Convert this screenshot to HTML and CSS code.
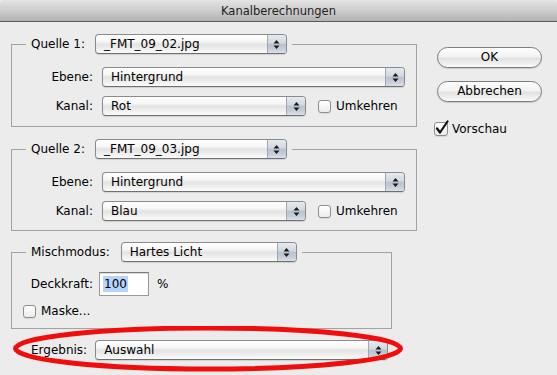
FILE: index.html
```html
<!DOCTYPE html>
<html lang="de">
<head>
<meta charset="utf-8">
<title>Kanalberechnungen</title>
<link rel="stylesheet" href="styles.css">
</head>
<body>
<div class="window">
  <div class="titlebar">Kanalberechnungen</div>
  <div class="content">
    <div class="main">
      <fieldset class="group">
        <legend class="legend"><div class="legend-inner"><span class="glabel">Quelle 1:</span><span class="popup w-src"><span class="popup-text">_FMT_09_02.jpg</span><span class="popup-arrows"><svg width="7" height="11" viewBox="0 0 7 11"><path d="M0.5 4.5 L3.5 1 L6.5 4.5 Z M0.5 6.5 L3.5 10 L6.5 6.5 Z" fill="#1c1c1c"/></svg></span></span></div></legend>
        <div class="rows">
          <div class="row"><span class="rlabel">Ebene:</span><span class="popup w-wide"><span class="popup-text">Hintergrund</span><span class="popup-arrows"><svg width="7" height="11" viewBox="0 0 7 11"><path d="M0.5 4.5 L3.5 1 L6.5 4.5 Z M0.5 6.5 L3.5 10 L6.5 6.5 Z" fill="#1c1c1c"/></svg></span></span></div>
          <div class="row"><span class="rlabel">Kanal:</span><span class="popup w-chan"><span class="popup-text">Rot</span><span class="popup-arrows"><svg width="7" height="11" viewBox="0 0 7 11"><path d="M0.5 4.5 L3.5 1 L6.5 4.5 Z M0.5 6.5 L3.5 10 L6.5 6.5 Z" fill="#1c1c1c"/></svg></span></span><span class="check check-inv"><span class="box"></span><span>Umkehren</span></span></div>
        </div>
      </fieldset>

      <fieldset class="group group-2">
        <legend class="legend"><div class="legend-inner"><span class="glabel">Quelle 2:</span><span class="popup w-src"><span class="popup-text">_FMT_09_03.jpg</span><span class="popup-arrows"><svg width="7" height="11" viewBox="0 0 7 11"><path d="M0.5 4.5 L3.5 1 L6.5 4.5 Z M0.5 6.5 L3.5 10 L6.5 6.5 Z" fill="#1c1c1c"/></svg></span></span></div></legend>
        <div class="rows rows-2">
          <div class="row"><span class="rlabel">Ebene:</span><span class="popup w-wide"><span class="popup-text">Hintergrund</span><span class="popup-arrows"><svg width="7" height="11" viewBox="0 0 7 11"><path d="M0.5 4.5 L3.5 1 L6.5 4.5 Z M0.5 6.5 L3.5 10 L6.5 6.5 Z" fill="#1c1c1c"/></svg></span></span></div>
          <div class="row"><span class="rlabel">Kanal:</span><span class="popup w-chan"><span class="popup-text">Blau</span><span class="popup-arrows"><svg width="7" height="11" viewBox="0 0 7 11"><path d="M0.5 4.5 L3.5 1 L6.5 4.5 Z M0.5 6.5 L3.5 10 L6.5 6.5 Z" fill="#1c1c1c"/></svg></span></span><span class="check check-inv"><span class="box"></span><span>Umkehren</span></span></div>
        </div>
      </fieldset>

      <fieldset class="group group-3">
        <legend class="legend"><div class="legend-inner"><span class="glabel glabel-mix">Mischmodus:</span><span class="popup w-mix"><span class="popup-text">Hartes Licht</span><span class="popup-arrows"><svg width="7" height="11" viewBox="0 0 7 11"><path d="M0.5 4.5 L3.5 1 L6.5 4.5 Z M0.5 6.5 L3.5 10 L6.5 6.5 Z" fill="#1c1c1c"/></svg></span></span></div></legend>
        <div class="rows rows-3">
          <div class="row row-input"><span class="rlabel rlabel-input">Deckkraft:</span><span class="textfield"><span class="sel">100</span></span><span class="unit">%</span></div>
          <div class="row row-mask"><span class="check"><span class="box"></span><span>Maske...</span></span></div>
        </div>
      </fieldset>

      <div class="result">
        <span class="glabel">Ergebnis:</span><span class="popup w-res"><span class="popup-text">Auswahl</span><span class="popup-arrows"><svg width="7" height="11" viewBox="0 0 7 11"><path d="M0.5 4.5 L3.5 1 L6.5 4.5 Z M0.5 6.5 L3.5 10 L6.5 6.5 Z" fill="#1c1c1c"/></svg></span></span>
        <svg class="ring" width="400" height="50" viewBox="0 0 400 50"><ellipse cx="197" cy="22.5" rx="192.5" ry="20.5" fill="none" stroke="#f20d0d" stroke-width="5"/></svg>
      </div>
    </div>

    <div class="side">
      <div class="btn">OK</div>
      <div class="btn btn-2">Abbrechen</div>
      <div class="check check-preview"><span class="box box-checked"><svg class="tick" width="16" height="16" viewBox="0 0 16 16"><path d="M3 8.5 L6 12.5 L13.5 1.5" fill="none" stroke="#111" stroke-width="2.2" stroke-linejoin="round" stroke-linecap="round"/></svg></span><span>Vorschau</span></div>
    </div>
  </div>
</div>
</body>
</html>
```

FILE: styles.css
```css
html, body {
  margin: 0;
  padding: 0;
  background: #ececec;
}

body {
  font-family: "DejaVu Sans", "Noto Sans", sans-serif;
  font-size: 12px;
  color: #000;
  width: 557px;
  height: 375px;
  overflow: hidden;
}

.window {
  width: 557px;
  height: 375px;
  background: #ececec;
}

.titlebar {
  height: 21px;
  line-height: 22px;
  text-align: center;
  font-size: 11.5px;
  color: #1e1e1e;
  background: linear-gradient(#e4e4e4 0%, #cfcfcf 45%, #b3b3b3 100%);
  border-bottom: 1px solid #5a5a5a;
  border-radius: 4px 4px 0 0;
}

.content {
  display: flex;
  padding: 0 0 0 11px;
}

.main {
  width: 406px;
  padding-top: 12px;
  position: relative;
}

.side {
  margin-left: 20px;
  padding-top: 25px;
  width: 105px;
  display: flex;
  flex-direction: column;
}

/* group boxes */
.group {
  margin: 0;
  padding: 0;
  border: 1px solid #a2a2a2;
  min-width: 0;
}

.group-2 {
  margin-top: 12px;
}

.group-3 {
  margin-top: 11px;
  width: 381px;
  box-sizing: border-box;
}

.legend {
  margin-left: 14px;
  padding: 0 5px;
}

.legend-inner {
  display: flex;
  align-items: center;
  height: 20px;
}

.glabel {
  margin-right: 10px;
  line-height: 20px;
}

.glabel-mix {
  margin-right: 11px;
}

.rows {
  display: flex;
  flex-direction: column;
  gap: 9px;
  padding: 13px 0 10px 0;
}

.rows-2 {
  padding-bottom: 9px;
}

.rows-3 {
  padding: 10px 0 10px 0;
  gap: 8px;
}

.row {
  display: flex;
  align-items: center;
  height: 20px;
}

.row-input {
  height: 24px;
}

.row-mask {
  height: 14px;
  padding-left: 11px;
}

.rlabel {
  width: 81px;
  text-align: right;
  margin-right: 9px;
}

.rlabel-input {
  margin-right: 6px;
}

/* popup buttons */
.popup {
  display: inline-flex;
  height: 20px;
  box-sizing: border-box;
  border: 1px solid #8b8b8b;
  border-bottom-color: #6f6f6f;
  border-radius: 4px;
  overflow: hidden;
  background: linear-gradient(#ffffff 0%, #f7f7f7 35%, #e3e3e3 52%, #eeeeee 75%, #fbfbfb 100%);
  box-shadow: 0 1px 1px rgba(0, 0, 0, 0.12);
}

.popup-text {
  flex: 1;
  padding-left: 8px;
  line-height: 18px;
  white-space: nowrap;
}

.popup-arrows {
  width: 18px;
  border-left: 1px solid #a3a8b0;
  display: flex;
  align-items: center;
  justify-content: center;
  background: linear-gradient(#e6eaf0 0%, #d2d8e1 45%, #b9c2cf 52%, #c6ced9 80%, #dde2e9 100%);
}

.w-src { width: 192px; }
.w-wide { width: 303px; }
.w-chan { width: 204px; }
.w-mix { width: 176px; }
.w-res { width: 293px; }

/* checkboxes */
.check {
  display: flex;
  align-items: center;
}

.check-inv {
  margin-left: 12px;
}

.box {
  width: 13px;
  height: 13px;
  box-sizing: border-box;
  border: 1px solid #8d8d8d;
  border-radius: 3px;
  background: linear-gradient(#ffffff, #ececec);
  margin-right: 5px;
  position: relative;
  box-shadow: 0 1px 0 rgba(0, 0, 0, 0.08);
}

.check-preview {
  margin-top: 20px;
  margin-left: -3px;
}

.box-checked {
  width: 14px;
  height: 14px;
  margin-right: 4px;
}

.tick {
  position: absolute;
  left: -1px;
  top: -3px;
}

/* buttons */
.btn {
  height: 21px;
  box-sizing: border-box;
  border: 1px solid #7c7c7c;
  border-radius: 11px;
  text-align: center;
  line-height: 19px;
  background: linear-gradient(#fefefe 0%, #f3f3f3 45%, #e2e2e2 55%, #f1f1f1 85%, #fcfcfc 100%);
  box-shadow: 0 1px 1px rgba(0, 0, 0, 0.15);
}

.btn-2 {
  margin-top: 13px;
}

/* text field */
.textfield {
  width: 50px;
  height: 24px;
  box-sizing: border-box;
  border: 1px solid #9a9a9a;
  border-top-color: #7a7a7a;
  background: #fff;
  box-shadow: inset 0 1px 1px rgba(0, 0, 0, 0.15);
  display: flex;
  align-items: center;
  padding-left: 3px;
}

.sel {
  background: #b6d4fb;
  line-height: 16px;
  padding: 0 1px;
}

.unit {
  margin-left: 8px;
}

/* result row */
.result {
  display: flex;
  align-items: center;
  height: 20px;
  margin-top: 11px;
  padding-left: 20px;
  position: relative;
}

.result .glabel {
  margin-right: 8px;
}

.ring {
  position: absolute;
  left: 0px;
  top: -14px;
  pointer-events: none;
}
```
